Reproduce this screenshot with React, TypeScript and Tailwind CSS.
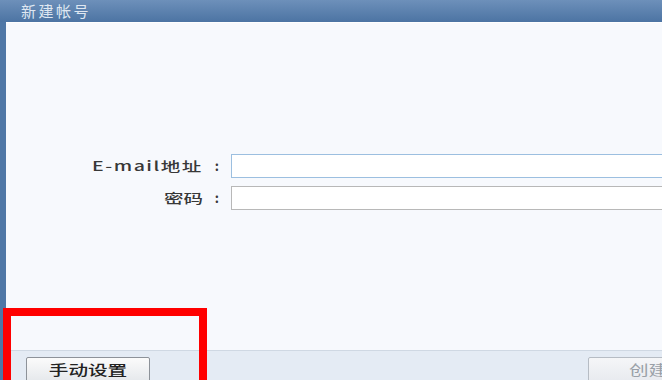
import React from "react";

export default function App() {
  const cjk = { fontFamily: '"Noto Sans CJK SC", "Noto Sans", sans-serif' };
  return (
    <div className="relative w-[662px] h-[380px] overflow-hidden bg-[#4f77a6]" style={cjk}>
      <div className="flex h-full flex-col">
        <div className="h-[22px] shrink-0 flex items-center bg-gradient-to-b from-[#6d90ba] to-[#4c74a3] pl-[21px] text-[15px] leading-[18px] tracking-[2.5px] text-[#dfe7f1]">
          <span>新建帐号</span>
        </div>
        <div className="flex flex-1 min-h-0">
          <div className="w-[6px] shrink-0 bg-[#4f77a6]" />
          <div className="flex flex-1 flex-col bg-[#f7f9fd] border-t border-[#ffffff]">
            <div className="flex-1 flex flex-col pt-[131px]">
              <div className="flex items-center h-[24px]">
                <div className="w-[225px] shrink-0 flex justify-end items-center pr-[12px] text-[13px] font-medium text-[#383838]">
                  <span className="inline-block origin-right scale-x-[1.5] tracking-[1px]">E-mail地址</span>
                  <span className="ml-[12px] font-bold">:</span>
                </div>
                <div className="h-[24px] flex-1 border border-[#9cbfe0] bg-white mr-[-20px]" />
              </div>
              <div className="flex items-center h-[24px] mt-[8px]">
                <div className="w-[225px] shrink-0 flex justify-end items-center pr-[12px] text-[13px] font-medium text-[#383838]">
                  <span className="inline-block origin-right scale-x-[1.5]">密码</span>
                  <span className="ml-[12px] font-bold">:</span>
                </div>
                <div className="h-[24px] flex-1 border border-[#b8b8b8] bg-white mr-[-20px]" />
              </div>
            </div>
            <div className="h-[30px] shrink-0 border-t border-[#cfd8e3] bg-[#e4ebf4] flex items-start pt-[6px] justify-between">
              <div className="ml-[20px] w-[124px] h-[28px] border border-[#8d9299] rounded-[2px] bg-gradient-to-b from-[#fbfbfb] to-[#e3e6ea] flex justify-center text-[14px] leading-[22px] font-medium text-[#222]">
                <span className="inline-block scale-x-[1.4]">手动设置</span>
              </div>
              <div className="mr-[-20px] w-[94px] h-[28px] border border-[#b6bcc4] rounded-[2px] bg-gradient-to-b from-[#f5f6f8] to-[#e6e9ee] pl-[40px] text-[14px] leading-[22px] text-[#9aa0a8]">
                <span className="inline-block origin-left scale-x-[1.4]">创建</span>
              </div>
            </div>
          </div>
        </div>
      </div>
      <div className="absolute left-[3px] top-[308px] w-[204px] h-[90px] border-[8px] border-[#ff0000]" />
    </div>
  );
}
